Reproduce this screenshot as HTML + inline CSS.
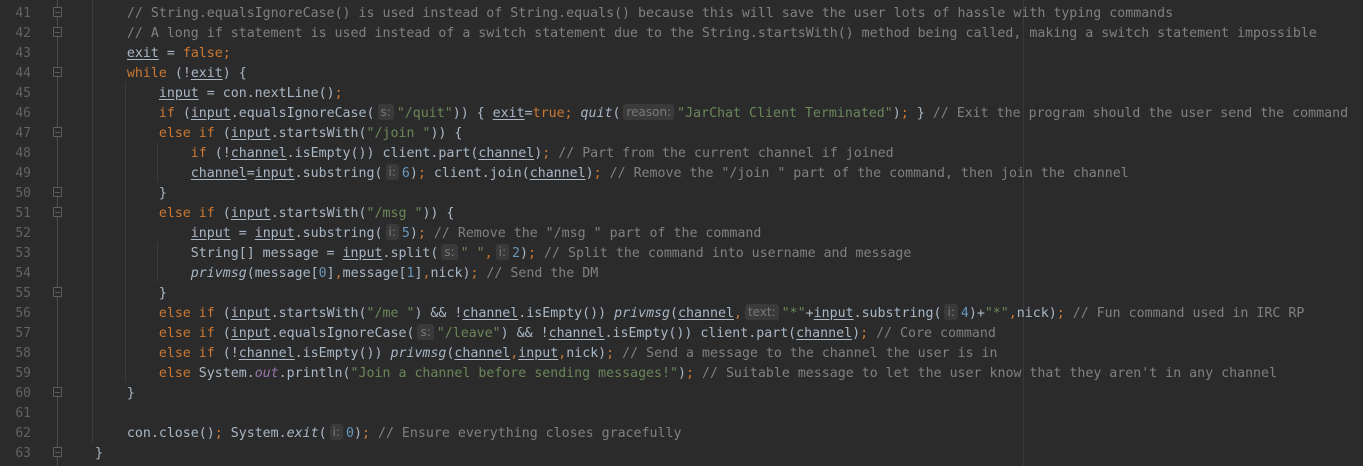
<!DOCTYPE html>
<html><head><meta charset="utf-8"><style>
html,body{margin:0;padding:0;background:#2b2b2b;width:1363px;height:466px;overflow:hidden}
.ln{position:absolute;left:0;width:31px;text-align:right;color:#606366;font:13px "DejaVu Sans Mono",monospace;line-height:20px}
.code{position:absolute;left:63px;top:4px;font:13.28px "DejaVu Sans Mono",monospace;color:#a9b7c6;white-space:pre;line-height:20px}
.k{color:#cc7832}.s{color:#6a8759}.c{color:#808080}.n{color:#6897bb}
.u{text-decoration:underline;text-decoration-color:#a9b7c6;text-underline-offset:2px}
.i{font-style:italic}.o{color:#9876aa;font-style:italic}
.h{display:inline-block;background:#3a3a3a;color:#787878;border-radius:3px;font:12px "DejaVu Sans",sans-serif;line-height:16px;padding:0 3px;margin:0 3px 0 3px;vertical-align:1px}
.g{position:absolute;width:1px;background:#3b3b3b}
.f{position:absolute;left:53px;width:9px;height:10px;border:1px solid #5a5d60;background:#2b2b2b;box-sizing:border-box}
.f:after{content:"";position:absolute;left:1px;top:4px;width:5px;height:1px;background:#5a5d60}
</style></head><body>
<div class="g" style="left:57px;top:0;height:466px;background:#4a4d50"></div>
<div class="g" style="left:92px;top:0;height:442px"></div>
<div class="g" style="left:125px;top:82px;height:300px"></div>
<div class="g" style="left:157px;top:142px;height:40px"></div>
<div class="g" style="left:157px;top:242px;height:40px"></div>
<div class="g" style="left:1023px;top:0;height:466px;background:#3a3a3a"></div>
<div class="f" style="top:7px"></div><div class="f" style="top:27px"></div><div class="f" style="top:67px"></div>
<div class="f" style="top:127px"></div><div class="f" style="top:187px"></div><div class="f" style="top:207px"></div>
<div class="f" style="top:287px"></div><div class="f" style="top:387px"></div><div class="f" style="top:447px"></div>
<div class="ln" style="top:4px">41<br>42<br>43<br>44<br>45<br>46<br>47<br>48<br>49<br>50<br>51<br>52<br>53<br>54<br>55<br>56<br>57<br>58<br>59<br>60<br>61<br>62<br>63</div>
<div class="code"><span class="c">        // String.equalsIgnoreCase() is used instead of String.equals() because this will save the user lots of hassle with typing commands</span>
<span class="c">        // A long if statement is used instead of a switch statement due to the String.startsWith() method being called, making a switch statement impossible</span>
        <span class="u">exit</span> = <span class="k">false;</span>
        <span class="k">while </span>(!<span class="u">exit</span>) {
            <span class="u">input</span> = con.nextLine()<span class="k">;</span>
            <span class="k">if </span>(<span class="u">input</span>.equalsIgnoreCase(<span class="h">s:</span><span class="s">"/quit"</span>)) { <span class="u">exit</span>=<span class="k">true; </span><span class="i">quit</span>(<span class="h">reason:</span><span class="s">"JarChat Client Terminated"</span>)<span class="k">; </span>} <span class="c">// Exit the program should the user send the command</span>
            <span class="k">else if </span>(<span class="u">input</span>.startsWith(<span class="s">"/join "</span>)) {
                <span class="k">if </span>(!<span class="u">channel</span>.isEmpty()) client.part(<span class="u">channel</span>)<span class="k">; </span><span class="c">// Part from the current channel if joined</span>
                <span class="u">channel</span>=<span class="u">input</span>.substring(<span class="h">i:</span><span class="n">6</span>)<span class="k">; </span>client.join(<span class="u">channel</span>)<span class="k">; </span><span class="c">// Remove the "/join " part of the command, then join the channel</span>
            }
            <span class="k">else if </span>(<span class="u">input</span>.startsWith(<span class="s">"/msg "</span>)) {
                <span class="u">input</span> = <span class="u">input</span>.substring(<span class="h">i:</span><span class="n">5</span>)<span class="k">; </span><span class="c">// Remove the "/msg " part of the command</span>
                String[] message = <span class="u">input</span>.split(<span class="h">s:</span><span class="s">" "</span><span class="k">,</span><span class="h">i:</span><span class="n">2</span>)<span class="k">; </span><span class="c">// Split the command into username and message</span>
                <span class="i">privmsg</span>(message[<span class="n">0</span>]<span class="k">,</span>message[<span class="n">1</span>]<span class="k">,</span>nick)<span class="k">; </span><span class="c">// Send the DM</span>
            }
            <span class="k">else if </span>(<span class="u">input</span>.startsWith(<span class="s">"/me "</span>) &amp;&amp; !<span class="u">channel</span>.isEmpty()) <span class="i">privmsg</span>(<span class="u">channel</span><span class="k">,</span><span class="h">text:</span><span class="s">"*"</span>+<span class="u">input</span>.substring(<span class="h">i:</span><span class="n">4</span>)+<span class="s">"*"</span><span class="k">,</span>nick)<span class="k">; </span><span class="c">// Fun command used in IRC RP</span>
            <span class="k">else if </span>(<span class="u">input</span>.equalsIgnoreCase(<span class="h">s:</span><span class="s">"/leave"</span>) &amp;&amp; !<span class="u">channel</span>.isEmpty()) client.part(<span class="u">channel</span>)<span class="k">; </span><span class="c">// Core command</span>
            <span class="k">else if </span>(!<span class="u">channel</span>.isEmpty()) <span class="i">privmsg</span>(<span class="u">channel</span><span class="k">,</span><span class="u">input</span><span class="k">,</span>nick)<span class="k">; </span><span class="c">// Send a message to the channel the user is in</span>
            <span class="k">else </span>System.<span class="o">out</span>.println(<span class="s">"Join a channel before sending messages!"</span>)<span class="k">; </span><span class="c">// Suitable message to let the user know that they aren't in any channel</span>
        }

        con.close()<span class="k">; </span>System.<span class="i">exit</span>(<span class="h">i:</span><span class="n">0</span>)<span class="k">; </span><span class="c">// Ensure everything closes gracefully</span>
    }</div>
</body></html>
